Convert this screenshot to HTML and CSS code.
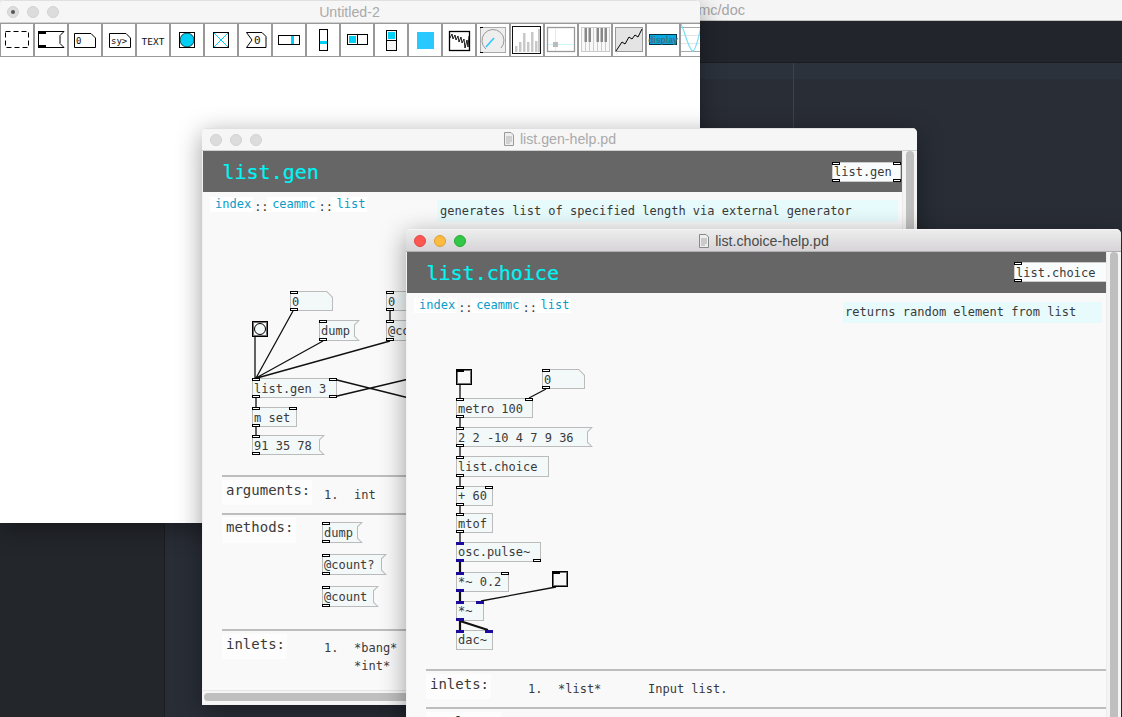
FILE: index.html
```html
<!DOCTYPE html>
<html lang="en">
<head>
  <meta charset="utf-8">
  <title>list.choice-help.pd</title>
  <link rel="stylesheet" href="styles.css">
</head>
<body>
  <!-- editor behind the windows -->
  <div class="desk">
    <div class="urlbar">ceammc/doc</div>
    <div class="strip"></div>
    <div class="panes">
      <div class="side"></div>
      <div class="pane"><div class="tabbar"></div></div>
      <div class="pane"><div class="tabbar"></div></div>
    </div>
  </div>

  <!-- Untitled-2 -->
  <div class="win win-new">
    <div class="titlebar">
      <div class="dots"><i class="dot dot-edited"></i><i class="dot"></i><i class="dot"></i></div>
      <div class="wintitle">Untitled-2</div>
    </div>
    <div class="toolbar">
      <div class="tool"><svg viewBox="0 0 32 32"><rect x="4.500" y="7.500" width="23" height="16" fill="none" stroke="#000" stroke-dasharray="5 3"/></svg></div>
      <div class="tool"><svg viewBox="0 0 32 32"><path d="M3.500 7.500H29L25 11.500V19.500L29 23.500H3.500Z" fill="#fff" stroke="#000"/><rect x="3" y="7" width="8" height="3"/><rect x="3" y="21" width="8" height="3"/></svg></div>
      <div class="tool"><svg viewBox="0 0 32 32"><path d="M5.500 9.500H22L26.500 14V23.500H5.500Z" fill="#fff" stroke="#000"/><text x="7" y="20" class="ic-text">0</text></svg></div>
      <div class="tool"><svg viewBox="0 0 32 32"><path d="M6.500 9.500H23L27.500 14V23.500H6.500Z" fill="#fff" stroke="#000"/><text x="8" y="20" class="ic-text">sy&gt;</text></svg></div>
      <div class="tool"><svg viewBox="0 0 32 32"><text x="16" y="20.500" text-anchor="middle" class="ic-text ic-big">TEXT</text></svg></div>
      <div class="tool"><svg viewBox="0 0 32 32"><rect x="8.500" y="8.500" width="15" height="15" fill="#fff" stroke="#000"/><circle cx="16" cy="16" r="7" fill="#00d0f5" stroke="#000" stroke-width=".7"/></svg></div>
      <div class="tool"><svg viewBox="0 0 32 32"><rect x="8.500" y="8.500" width="15" height="15" fill="#fff" stroke="#000"/><path d="M9 9L23 23M23 9L9 23" stroke="#00d0f5"/></svg></div>
      <div class="tool"><svg viewBox="0 0 32 32"><path d="M7.500 8.500H23L27 12.500V23.500H7.500L13 16Z" fill="#fff" stroke="#000"/><text x="15" y="20" class="ic-text ic-num">0</text></svg></div>
      <div class="tool"><svg viewBox="0 0 32 32"><rect x="5.500" y="11.500" width="21" height="9" fill="#fff" stroke="#000"/><rect x="18" y="12" width="3" height="8" fill="#00d0f5"/></svg></div>
      <div class="tool"><svg viewBox="0 0 32 32"><rect x="12.500" y="5.500" width="8" height="21" fill="#fff" stroke="#000"/><rect x="13" y="17" width="7" height="3" fill="#00d0f5"/></svg></div>
      <div class="tool"><svg viewBox="0 0 32 32"><rect x="6.500" y="10.500" width="20" height="10" fill="#fff" stroke="#000"/><path d="M16.500 10.500V20.500" stroke="#000"/><rect x="8" y="12" width="7" height="7" fill="#00d0f5"/></svg></div>
      <div class="tool"><svg viewBox="0 0 32 32"><rect x="11.500" y="6.500" width="10" height="20" fill="#f6f6f6" stroke="#000"/><path d="M11.500 16.500H21.500" stroke="#000"/><rect x="13" y="8" width="7" height="7" fill="#00d0f5"/></svg></div>
      <div class="tool"><svg viewBox="0 0 32 32"><rect x="8" y="8" width="17" height="17" fill="#29c8ff"/></svg></div>
      <div class="tool"><svg viewBox="0 0 32 32"><rect x="6.500" y="7.500" width="20" height="19" fill="#fff" stroke="#000" stroke-width="1.300"/><path d="M7 14L9 10L10 15L12 11L13 16L15 12L16 18L18 13L19 19L21 15L22 24L24 16L25 23L26 12" fill="none" stroke="#000" stroke-width=".9"/></svg></div>
      <div class="tool"><svg viewBox="0 0 32 32"><rect x="3.500" y="3.500" width="25" height="25" fill="#eee" stroke="#aaa"/><path d="M9 25A11 11 0 1 1 24 24" fill="none" stroke="#999"/><path d="M9 23L17 14" stroke="#29c8ff" stroke-width="1.500"/><rect x="3" y="3" width="3" height="1"/><rect x="3" y="28" width="3" height="1"/></svg></div>
      <div class="tool"><svg viewBox="0 0 32 32"><rect x="1.500" y="2.500" width="28" height="27" fill="#fff" stroke="#111"/><path d="M4 22h2.500v6H4zM8 18h2.500v10H8zM12 9h2.500v19H12zM16 18h2.500v10H16zM20 8h2.500v20H20zM24 17h2.500v11H24zM27 5h2v23h-2z" fill="#c8c8c8"/></svg></div>
      <div class="tool"><svg viewBox="0 0 32 32"><rect x="2.500" y="3.500" width="27" height="24" fill="#fff" stroke="#999" stroke-width="1.300"/><path d="M10.500 4V27M3 20.500H29" stroke="#cdf3fb"/><rect x="8" y="18" width="5" height="5" fill="#bbb"/></svg></div>
      <div class="tool"><svg viewBox="0 0 32 32"><rect x="2.500" y="3.500" width="28" height="24" fill="#f8f8f8" stroke="#ccc"/><path d="M6.500 4V27M10.500 4V27M14.500 4V27M18.500 4V27M22.500 4V27M26.500 4V27" stroke="#ccc"/><path d="M5.500 4h2.500v14H5.500zM9.500 4h2.500v14H9.500zM17.500 4h2.500v14h-2.500zM21.500 4h2.500v14h-2.500zM25.500 4h2.500v14h-2.500z" fill="#888"/></svg></div>
      <div class="tool"><svg viewBox="0 0 32 32"><rect x="2.500" y="3.500" width="27" height="24" fill="#e4e4e4" stroke="#999"/><path d="M3 27L9 18L12 20L16 13L19 15L22 11L25 13L29 5" fill="none" stroke="#000"/></svg></div>
      <div class="tool"><svg viewBox="0 0 32 32"><rect x="2.500" y="10.500" width="27" height="10" fill="#0aa8e0" stroke="#034"/><text x="16" y="18.500" text-anchor="middle" class="ic-display">display</text></svg></div>
      <div class="tool"><svg viewBox="0 0 32 32"><path d="M0 3.500H32M0 27.500H32" stroke="#aaa"/><path d="M0 11.500H32M0 19.500H32" stroke="#e4e4e4"/><path d="M0 0C4 8 8 27 12 27C15 27 18 10 21 0" fill="none" stroke="#7fdff5" stroke-width="1.300"/></svg></div>
    </div>
  </div>

  <!-- list.gen-help.pd -->
  <div class="win win-gen">
    <div class="titlebar">
      <div class="dots"><i class="dot"></i><i class="dot"></i><i class="dot"></i></div>
      <div class="wintitle">
        <svg class="docicon" viewBox="0 0 12 14"><path d="M1.500 .500H8L10.500 3V13.500H1.500Z" fill="#eee" stroke="#999"/><path d="M3 5H9M3 7H9M3 9H9M3 11H7" stroke="#999" stroke-width=".7"/></svg>
        list.gen-help.pd
      </div>
    </div>
    <div class="winbody">
      <div class="canvas gen-canvas">
        <div class="helphead">
          <div class="helptitle">list.gen</div>
          <div class="box headobj hg-obj">list.gen<i class="io tl"></i><i class="io tr"></i><i class="io bl"></i><i class="io br"></i></div>
        </div>
        <nav class="crumbs"><a>index</a><span>::</span><a>ceammc</a><span>::</span><a>list</a></nav>
        <div class="descr g-descr">generates list of specified length via external generator</div>

        <svg class="wires" viewBox="0 0 699 539">
          <path d="M52 185V227M90 160L53 227M120 190L53 227M187 190L54 227M187 160V169M53 247V256M53 276V284M130 228L290 268M130 246L290 208"/>
        </svg>

        <div class="atom g-atom1">0<i class="io tl"></i><i class="io bl"></i></div>
        <div class="atom g-atom2">0<i class="io tl"></i><i class="io bl"></i></div>
        <div class="bang g-bang"><b></b></div>
        <div class="msg g-dump">dump<i class="io tl"></i><i class="io bl"></i></div>
        <div class="msg g-co">@count 2<i class="io tl"></i><i class="io bl"></i></div>
        <div class="box g-gen">list.gen 3<i class="io tl"></i><i class="io tr"></i><i class="io bl"></i><i class="io br"></i></div>
        <div class="box g-mset">m set<i class="io tl"></i><i class="io tr"></i><i class="io bl"></i></div>
        <div class="msg g-res">91 35 78<i class="io tl"></i><i class="io bl"></i></div>

        <hr class="rule g-r1">
        <div class="label g-args">arguments:</div>
        <div class="cell g-a1">1.</div>
        <div class="cell g-a2">int</div>
        <hr class="rule g-r2">
        <div class="label g-meth">methods:</div>
        <div class="msg g-m1">dump<i class="io tl"></i><i class="io bl"></i></div>
        <div class="msg g-m2">@count?<i class="io tl"></i><i class="io bl"></i></div>
        <div class="msg g-m3">@count<i class="io tl"></i><i class="io bl"></i></div>
        <hr class="rule g-r3">
        <div class="label g-inl">inlets:</div>
        <div class="cell g-i1">1.</div>
        <div class="cell g-i2">*bang*</div>
        <div class="cell g-i3">*int*</div>
      </div>
      <div class="vscroll"><div class="thumb"></div></div>
      <div class="hscroll"><div class="hthumb"></div></div>
    </div>
  </div>

  <!-- list.choice-help.pd -->
  <div class="win win-choice">
    <div class="titlebar titlebar-on">
      <div class="dots"><i class="dot dot-red"></i><i class="dot dot-amber"></i><i class="dot dot-green"></i></div>
      <div class="wintitle">
        <svg class="docicon" viewBox="0 0 12 14"><path d="M1.500 .500H8L10.500 3V13.500H1.500Z" fill="#eee" stroke="#888"/><path d="M3 5H9M3 7H9M3 9H9M3 11H7" stroke="#888" stroke-width=".7"/></svg>
        list.choice-help.pd
      </div>
    </div>
    <div class="winbody">
      <div class="canvas choice-canvas">
        <div class="helphead">
          <div class="helptitle">list.choice</div>
          <div class="box headobj hc-obj">list.choice<i class="io tl"></i><i class="io bl"></i></div>
        </div>
        <nav class="crumbs"><a>index</a><span>::</span><a>ceammc</a><span>::</span><a>list</a></nav>
        <div class="descr c-descr">returns random element from list</div>

        <svg class="wires" viewBox="0 0 699 466">
          <path d="M53 133V146M139 137L122 146M53 166V175M53 195V204M53 225V234M53 254V261M53 281V290M149 335L74 349"/>
          <path class="sigwire" d="M53 310V320M53 340V349M53 369V378M53 369L81 378"/>
        </svg>

        <div class="bang c-bang1"><i class="io-solid"></i></div>
        <div class="atom c-atom">0<i class="io tl"></i><i class="io bl"></i></div>
        <div class="box c-metro">metro 100<i class="io tl"></i><i class="io tr"></i><i class="io bl"></i></div>
        <div class="msg c-list">2 2 -10 4 7 9 36<i class="io tl"></i><i class="io bl"></i></div>
        <div class="box c-choice">list.choice<i class="io tl"></i><i class="io bl"></i></div>
        <div class="box c-plus">+ 60<i class="io tl"></i><i class="io tr"></i><i class="io bl"></i></div>
        <div class="box c-mtof">mtof<i class="io tl"></i><i class="io bl"></i></div>
        <div class="box c-osc">osc.pulse~<i class="io tl sig"></i><i class="io bl sig"></i><i class="io br"></i></div>
        <div class="box c-mul1">*~ 0.2<i class="io tl sig"></i><i class="io tr"></i><i class="io bl sig"></i></div>
        <div class="box c-mul2">*~<i class="io tl sig"></i><i class="io tr sig"></i><i class="io bl sig"></i></div>
        <div class="bang c-bang2"><i class="io-solid"></i></div>
        <div class="box c-dac">dac~<i class="io tl sig"></i><i class="io tr sig"></i></div>

        <hr class="rule c-r1">
        <div class="label c-inl">inlets:</div>
        <div class="cell c-i1">1.</div>
        <div class="cell c-i2">*list*</div>
        <div class="cell c-i3">Input list.</div>
        <hr class="rule c-r2">
        <div class="label c-out">outlets:</div>
      </div>
      <div class="vscroll"><div class="thumb"></div></div>
    </div>
  </div>
</body>
</html>
```
FILE: styles.css
```css
*{box-sizing:border-box;}
html,body{margin:0;height:100%;}
body{
  width:1122px;
  height:717px;
  overflow:hidden;
  position:relative;
  background:#282c34;
  font-family:"DejaVu Sans Mono",monospace;
  font-size:12px;
  color:#3a3a3a;
}

/* editor in the background */
.desk{display:flex;flex-direction:column;height:100%;}
.urlbar{
  height:21px;
  padding-right:377px;
  background:#f5f5f5;
  border-bottom:1px solid #c4c4c4;
  color:#a6a6a6;
  font:14.5px/20px "Liberation Sans",sans-serif;
  text-align:right;
}
.strip{height:42px;background:#22252c;border-bottom:1px solid #1a1c20;}
.panes{flex:1;display:grid;grid-template-columns:164px 629px 1fr;}
.side{background:#23262b;}
.pane{background:#292d36;border-left:1px solid #1b1d22;}
.pane + .pane{border-left-color:#3c414c;}
.tabbar{height:16px;background:#2c323c;}

/* windows */
.win{
  position:absolute;
  overflow:hidden;
  border-radius:5px 5px 0 0;
  background:#fff;
  box-shadow:0 6px 26px rgba(0,0,0,.38);
}
.win-new{left:0;top:0;width:700px;height:523px;}
.win-gen{left:202px;top:128px;width:715px;height:577px;padding-left:1px;background:#f2f2f2;}
.win-choice{left:406px;top:229px;width:715px;height:520px;padding-left:1px;background:#f2f2f2;}

.titlebar{
  height:23px;
  margin-left:-1px;
  display:grid;
  grid-template-columns:1fr auto 1fr;
  align-items:center;
  background:#f6f6f6;
  border-top:1px solid #e0e0e0;
  border-bottom:1px solid #d0d0d0;
}
.titlebar-on{
  background:linear-gradient(#eeedee,#d6d4d6);
  border-top-color:#f4f4f4;
  border-bottom-color:#b0b0b0;
}
.dots{display:flex;gap:8px;padding-left:8px;}
.dot{
  width:12px;
  height:12px;
  border-radius:50%;
  background:#dcdcdc;
  border:1px solid #d2d2d2;
}
.dot-edited{position:relative;}
.dot-edited::after{
  content:"";
  position:absolute;
  left:3px;
  top:3px;
  width:4px;
  height:4px;
  border-radius:50%;
  background:#555;
}
.dot-red{background:#fc5753;border-color:#df4744;}
.dot-amber{background:#fdbc40;border-color:#de9f34;}
.dot-green{background:#33c748;border-color:#27aa35;}
.wintitle{
  display:flex;
  align-items:center;
  gap:5px;
  font:14.200px/16px "Liberation Sans",sans-serif;
  color:#aaa;
}
.win-gen .wintitle{margin-top:-1px;}
.titlebar-on .wintitle{color:#4a4a4a;}
.docicon{width:12px;height:14px;}

/* object palette */
.toolbar{display:flex;height:34px;}
.tool{flex:0 0 34px;height:34px;border:1px solid #999;background:#fff;}
.tool svg{display:block;width:32px;height:32px;}
.ic-text{font:9px "DejaVu Sans Mono",monospace;fill:#111;}
.ic-big{font-size:9.5px;}
.ic-num{font-size:11px;}
.ic-display{font:bold 8.5px "Liberation Sans",sans-serif;fill:#3f6f80;}

/* help patch */
.winbody{position:relative;display:grid;grid-template-columns:699px 15px;}
.canvas{position:relative;overflow:hidden;background:#f9f9f9;}
.gen-canvas{height:539px;}
.choice-canvas{height:497px;}
.helphead{height:41px;background:#666;position:relative;overflow:hidden;}
.helptitle{
  position:absolute;
  left:19.500px;
  top:8px;
  font-size:20px;
  line-height:26px;
  color:#00f5f5;
  -webkit-text-stroke:.2px #00f5f5;
}
.vscroll{background:#f4f4f4;border-left:1px solid #ececec;padding:0 0 0 3px;}
.thumb{width:8px;height:100%;border-radius:4px 4px 0 0;background:#bfbfbf;}
.hscroll{
  grid-column:1 / 3;
  height:14px;
  background:#f6f6f6;
  border-top:1px solid #e6e6e6;
  padding:2px 14px 0 1px;
}
.hthumb{height:8px;border-radius:4px;background:#bfbfbf;}

.crumbs{position:absolute;left:7px;top:46px;display:flex;height:15px;line-height:14px;}
.crumbs a{padding:0 2px 0 5px;background:#fff;color:#0a9bc7;}
.crumbs span{width:14px;padding:3px 0 0 1px;}

.descr{position:absolute;background:#e8fbfc;white-space:pre;}
.g-descr{left:234px;top:49px;width:461px;height:22px;padding-left:3px;line-height:23px;}
.c-descr{left:436px;top:50px;width:259px;height:21px;padding-left:2px;line-height:21px;}

.wires{position:absolute;left:0;top:0;width:699px;fill:none;stroke:#111;stroke-width:1.300;}
.gen-canvas .wires{height:539px;}
.choice-canvas .wires{height:466px;}
.wires .sigwire{stroke-width:2.200;}

/* patch objects */
.box,.msg,.atom{
  position:absolute;
  display:flex;
  align-items:center;
  padding:2px 0 0 2px;
  white-space:pre;
}
.box{background:#f3f8f9;border:1px solid #bbb;padding-left:1px;}
.msg,.atom{isolation:isolate;}
.msg::before,.msg::after,.atom::before,.atom::after{
  content:"";
  position:absolute;
  z-index:-1;
}
.msg::before,.atom::before{inset:0;background:#bbb;}
.msg::after,.atom::after{inset:1px;background:#f3f8f9;}
.msg::before{
  clip-path:polygon(0 0,100% 0,calc(100% - 5px) 5px,calc(100% - 5px) calc(100% - 5px),100% 100%,0 100%);
}
.msg::after{
  clip-path:polygon(0 0,calc(100% - 1.400px) 0,calc(100% - 5px) 3.600px,calc(100% - 5px) calc(100% - 3.600px),calc(100% - 1.400px) 100%,0 100%);
}
.atom::before{
  clip-path:polygon(0 0,calc(100% - 6px) 0,100% 6px,100% 100%,0 100%);
}
.atom::after{
  clip-path:polygon(0 0,calc(100% - 5.400px) 0,100% 5.400px,100% 100%,0 100%);
}
.bang{
  position:absolute;
  width:16px;
  height:16px;
  background:#f9f9f9;
  border:1px solid #000;
  box-shadow:inset 0 0 0 1px rgba(0,0,0,.55);
}
.bang b{display:block;width:12px;height:12px;margin:1px;border:1px solid #000;border-radius:50%;background:#f3f8f9;}
.io-solid{display:block;width:7px;height:2px;background:#000;}
.io{
  position:absolute;
  width:8px;
  height:3px;
  background:#fff;
  border:1px solid #000;
}
.tl{left:0;top:0;}
.tr{right:0;top:0;}
.bl{left:0;bottom:0;}
.br{right:0;bottom:0;}
.box > .tl,.box > .bl{left:-1px;}
.box > .tr,.box > .br{right:-1px;}
.box > .tl,.box > .tr{top:-1px;}
.box > .bl,.box > .br{bottom:-1px;}
.sig{background:#1c0a9c;border-color:#1c0a9c;}

.headobj{background:#f8fcfc;border-color:#ccc;}
.hg-obj{left:629px;top:11px;width:69px;height:20px;padding-top:0;}
.hc-obj{left:607px;top:10px;width:110px;height:20px;}

.rule{
  position:absolute;
  left:19px;
  right:0;
  height:2px;
  margin:0;
  border:0;
  background:#bdbdbd;
}
.label{
  position:absolute;
  padding-left:4px;
  font-size:14px;
  line-height:21px;
  background:#fdfdfd;
  white-space:pre;
}
.cell{position:absolute;line-height:16px;white-space:pre;}

/* list.gen patch */
.g-atom1{left:87px;top:140px;width:43px;height:20px;}
.g-atom2{left:183px;top:140px;width:43px;height:20px;}
.g-bang{left:49px;top:170px;}
.g-dump{left:116px;top:169px;width:41px;height:21px;padding-top:0;}
.g-co{left:183px;top:169px;width:80px;height:21px;padding-top:0;}
.g-gen{left:49px;top:227px;width:85px;height:20px;}
.g-mset{left:49px;top:256px;width:45px;height:20px;}
.g-res{left:49px;top:284px;width:73px;height:20px;}
.g-r1{top:324px;}
.g-args{left:19px;top:329px;width:90px;height:25px;}
.g-a1{left:121px;top:336px;}
.g-a2{left:151px;top:336px;}
.g-r2{top:362px;}
.g-meth{left:19px;top:366px;width:74px;height:26px;}
.g-m1{left:119px;top:371px;width:41px;height:21px;padding-top:0;}
.g-m2{left:119px;top:403px;width:65px;height:21px;padding-top:0;}
.g-m3{left:119px;top:435px;width:57px;height:21px;padding-top:0;}
.g-r3{top:478px;}
.g-inl{left:19px;top:483px;width:65px;height:25px;}
.g-i1{left:121px;top:489px;}
.g-i2{left:151px;top:489px;}
.g-i3{left:151px;top:507px;}

/* list.choice patch */
.c-bang1{left:49px;top:117px;}
.c-atom{left:135px;top:117px;width:43px;height:20px;}
.c-metro{left:49px;top:146px;width:77px;height:20px;}
.c-list{left:49px;top:175px;width:137px;height:20px;}
.c-choice{left:49px;top:204px;width:93px;height:21px;padding-top:0;}
.c-plus{left:49px;top:234px;width:37px;height:20px;padding-top:0;}
.c-mtof{left:49px;top:261px;width:37px;height:20px;}
.c-osc{left:49px;top:290px;width:85px;height:20px;padding-top:0;}
.c-mul1{left:49px;top:320px;width:53px;height:20px;padding-top:0;}
.c-mul2{left:49px;top:349px;width:28px;height:20px;padding-top:0;}
.c-bang2{left:145px;top:319px;}
.c-dac{left:49px;top:378px;width:37px;height:20px;padding-top:0;}
.c-r1{top:417px;}
.c-inl{left:19px;top:422px;width:65px;height:25px;}
.c-i1{left:121px;top:429px;}
.c-i2{left:151px;top:429px;}
.c-i3{left:241px;top:429px;}
.c-r2{top:455px;}
.c-out{left:19px;top:460px;width:75px;height:26px;}
```
